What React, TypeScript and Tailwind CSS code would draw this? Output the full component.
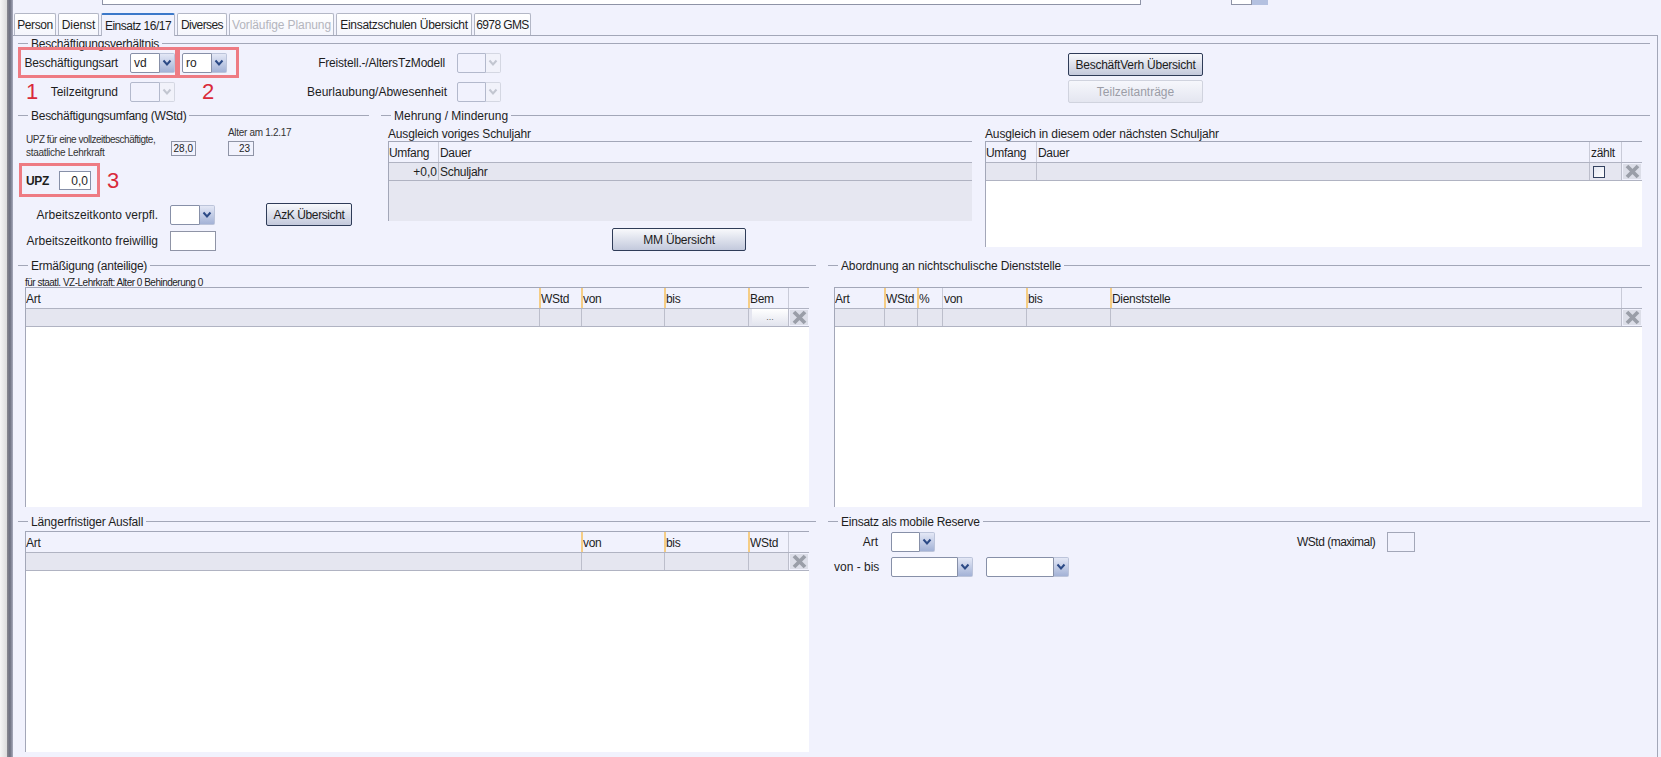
import type { ReactNode } from "react";

type Col = { label: string; w: string; mark?: boolean; cell?: ReactNode };

const tabs = [
  { label: "Person", w: "w-[42px]", track: "tracking-[-0.4px]" },
  { label: "Dienst", w: "w-[41px]", track: "tracking-[-0.1px]" },
  { label: "Einsatz 16/17", w: "w-[74px]", track: "tracking-[-0.5px]", active: true },
  { label: "Diverses", w: "w-[50px]", track: "tracking-[-0.6px]" },
  { label: "Vorläufige Planung", w: "w-[105px]", track: "tracking-[-0.1px]", disabled: true },
  { label: "Einsatzschulen Übersicht", w: "w-[136px]", track: "tracking-[-0.3px]" },
  { label: "6978 GMS", w: "w-[57px]", track: "tracking-[-0.6px]" },
];

const DeleteIcon = () => (
  <div className="flex h-full w-full items-center justify-center bg-[#dcdee8] border border-[#f1f2fd]">
    <svg width="15" height="15" viewBox="0 0 15 15">
      <path d="M2 2 L13 13 M13 2 L2 13" stroke="#9a9ea8" strokeWidth="3.8" />
    </svg>
  </div>
);

const Chevron = ({ color }: { color: string }) => (
  <svg width="10" height="8" viewBox="0 0 10 8">
    <path d="M1.5 1.5 L5 5.5 L8.5 1.5" fill="none" stroke={color} strokeWidth="2" />
  </svg>
);

const Combo = ({ value, field, disabled }: { value?: string; field: string; disabled?: boolean }) => (
  <div className="flex h-[20px] shrink-0">
    <div
      className={`${field} flex items-center border pl-[3px] rounded-l-[2px] ${
        disabled ? "border-[#b3b9cc] bg-[#f1f2fd]" : "border-[#8790a8] bg-white"
      }`}
    >
      {value}
    </div>
    <div
      className={`flex w-[15px] items-center justify-center border border-l-0 rounded-r-[2px] ${
        disabled
          ? "border-[#d4d7e2] bg-[#f1f2fa]"
          : "border-[#bcc4da] bg-gradient-to-b from-[#e4e8f6] to-[#a3b2d6]"
      }`}
    >
      <Chevron color={disabled ? "#c2c6d0" : "#2c4a86"} />
    </div>
  </div>
);

const Button = ({ label, w, track = "", disabled }: { label: string; w: string; track?: string; disabled?: boolean }) => (
  <div
    className={`${w} ${track} flex h-[23px] shrink-0 items-center justify-center rounded-[2px] border ${
      disabled
        ? "border-[#d0d3de] bg-gradient-to-b from-[#f6f7fc] to-[#e4e6f0] text-[#9b9da6]"
        : "border-[#2f3c58] bg-gradient-to-b from-[#f8f9fc] to-[#c3c9dc] text-[#1c1c1c]"
    }`}
  >
    {label}
  </div>
);

const Section = ({ title, track = "" }: { title: string; track?: string }) => (
  <div className="flex h-[14px] items-center">
    <div className="h-px w-[10px] bg-[#a3a7b8]" />
    <span className={`${track} px-[3px] pt-px leading-[14px] whitespace-nowrap`}>{title}</span>
    <div className="h-px flex-1 bg-[#a3a7b8]" />
  </div>
);

const Table = ({ cols, width, body }: { cols: Col[]; width: string; body: string }) => (
  <div className={`${width} flex flex-col border-t border-l border-[#a3a7b8]`}>
    <div className="flex h-[20px] shrink-0">
      {cols.map((c, i) => (
        <div
          key={i}
          className={`${c.w} flex items-center overflow-hidden whitespace-nowrap pt-px tracking-[-0.3px] ${
            i === 0 ? "" : c.mark ? "border-l-2 border-[#f5cd85]" : "border-l border-[#c9cbd8] pl-[1px]"
          }`}
        >
          {c.label}
        </div>
      ))}
    </div>
    <div className="flex h-[19px] shrink-0 border-t border-b border-[#b0b3c2] bg-[#e5e6f0]">
      {cols.map((c, i) => (
        <div key={i} className={`${c.w} flex items-center overflow-hidden ${i === 0 ? "" : "border-l border-[#bcbecb]"}`}>
          {c.cell}
        </div>
      ))}
    </div>
    <div className={body} />
  </div>
);

const Small = ({ children, track = "tracking-[-0.3px]" }: { children: ReactNode; track?: string }) => (
  <div className={`${track} text-[10px] leading-[13px] text-[#333] whitespace-nowrap`}>{children}</div>
);

const Annotation = ({ children, className = "" }: { children: ReactNode; className?: string }) => (
  <span className={`text-[22px] leading-[20px] text-[#d92a3a] ${className}`}>{children}</span>
);

const x = <DeleteIcon />;

export default function App() {
  return (
    <div className="flex h-[757px] w-[1661px] overflow-hidden bg-[#f1f2fd] font-['Liberation_Sans',Arial,sans-serif] text-[12px] text-[#1e1e1e]">
      <div className="w-[7px] shrink-0 bg-gradient-to-r from-[#f6f6f6] to-[#dcdcdc]" />
      <div className="w-[6px] shrink-0 bg-gradient-to-r from-[#8a8a90] via-[#6c6f80] to-[#a9acbd]" />

      <div className="flex w-[1648px] flex-col">
        {/* top field, cut off by the screenshot */}
        <div className="flex h-[13px] shrink-0 items-start">
          <div className="ml-[89px] h-[5px] w-[1039px] border-x border-b border-[#8e93a6] bg-white" />
          <div className="ml-[90px] h-[5px] w-[21px] border-x border-b border-[#8e93a6] bg-white" />
          <div className="h-[5px] w-[16px] bg-[#b4c1e0]" />
        </div>

        {/* tabs */}
        <div className="relative z-10 flex h-[23px] shrink-0 gap-[2px] pl-[1px]">
          {tabs.map((t) => (
            <div
              key={t.label}
              className={`${t.w} ${t.track} flex items-center justify-center whitespace-nowrap rounded-t-[2px] border-x border-t border-[#b3b7c6] ${
                t.active
                  ? "h-[23px] border-t-2 border-t-[#3b78c9] bg-[#f1f2fd]"
                  : "h-[22px] bg-gradient-to-b from-white to-[#f4f5fc]"
              } ${t.disabled ? "text-[#b4b5bd]" : ""}`}
            >
              {t.label}
            </div>
          ))}
        </div>

        {/* tab pane */}
        <div className="-mt-px flex w-[1645px] flex-1 flex-col border-t border-r border-[#a3a7b8] pl-[5px] pr-[7px]">
          {/* Beschäftigungsverhältnis */}
          <div className="h-[72px] shrink-0">
            <Section title="Beschäftigungsverhältnis" track="tracking-[-0.22px]" />
            <div className="ml-[8px] mt-[3px] flex">
              <div className="flex w-[281px] flex-col gap-[9px]">
                <div className="relative flex items-center">
                  <div className="-ml-[2px] w-[94px] shrink-0 whitespace-nowrap text-right tracking-[-0.15px]">Beschäftigungsart</div>
                  <div className="ml-[12px]"><Combo value="vd" field="w-[30px]" /></div>
                  <div className="ml-[7px]"><Combo value="ro" field="w-[30px]" /></div>
                  <div className="absolute -left-[8px] -top-[6px] h-[31px] w-[160px] border-[3px] border-[#ee7b83]" />
                  <div className="absolute left-[151px] -top-[6px] h-[31px] w-[62px] border-[3px] border-[#ee7b83]" />
                </div>
                <div className="relative flex items-center">
                  <div className="w-[92px] shrink-0 text-right">Teilzeitgrund</div>
                  <div className="ml-[12px]"><Combo field="w-[30px]" disabled /></div>
                  <Annotation className="ml-[27px]">2</Annotation>
                  <Annotation className="absolute left-0 top-0">1</Annotation>
                </div>
              </div>
              <div className="flex w-[761px] flex-col gap-[9px]">
                <div className="flex items-center">
                  <div className="w-[138px] shrink-0 whitespace-nowrap text-right tracking-[-0.2px]">Freistell.-/AltersTzModell</div>
                  <div className="ml-[12px]"><Combo field="w-[29px]" disabled /></div>
                </div>
                <div className="flex items-center">
                  <div className="w-[138px] shrink-0 whitespace-nowrap text-right">Beurlaubung/Abwesenheit</div>
                  <div className="ml-[12px]"><Combo field="w-[29px]" disabled /></div>
                </div>
              </div>
              <div className="flex flex-col gap-[4px]">
                <Button label="BeschäftVerh Übersicht" w="w-[135px]" track="tracking-[-0.24px]" />
                <Button label="Teilzeitanträge" w="w-[135px]" disabled />
              </div>
            </div>
          </div>

          {/* Beschäftigungsumfang / Mehrung */}
          <div className="flex h-[150px] shrink-0 gap-[12px]">
            <div className="w-[351px] shrink-0">
              <Section title="Beschäftigungsumfang (WStd)" track="tracking-[-0.27px]" />
              <div className="ml-[8px] flex h-[49px]">
                <div className="w-[145px] pt-[11px]">
                  <Small track="tracking-[-0.5px]">UPZ für eine vollzeitbeschäftigte,</Small>
                  <Small>staatliche Lehrkraft</Small>
                </div>
                <div className="mt-[19px] flex h-[15px] w-[25px] items-center justify-end border border-[#8f94a6] pr-[2px] text-[10px]">28,0</div>
                <div className="ml-[32px] mt-[4px]">
                  <Small>Alter am 1.2.17</Small>
                  <div className="mt-[2px] flex h-[15px] w-[26px] items-center justify-end border border-[#8f94a6] pr-[3px] text-[10px]">23</div>
                </div>
              </div>
              <div className="relative ml-[8px] flex h-[19px] items-center">
                <b className="w-[33px] tracking-[-0.3px]">UPZ</b>
                <div className="flex h-[19px] w-[32px] items-center justify-end border border-[#8790a8] bg-white pr-[2px]">0,0</div>
                <Annotation className="ml-[16px]">3</Annotation>
                <div className="absolute -left-[7px] -top-[8px] h-[34px] w-[81px] border-[3px] border-[#ee7b83]" />
              </div>
              <div className="ml-[8px] mt-[13px] flex h-[23px] items-center">
                <div className="w-[132px] shrink-0 whitespace-nowrap text-right">Arbeitszeitkonto verpfl.</div>
                <div className="ml-[12px]"><Combo field="w-[30px]" /></div>
                <div className="ml-[51px]"><Button label="AzK Übersicht" w="w-[86px]" track="tracking-[-0.4px]" /></div>
              </div>
              <div className="ml-[8px] mt-[5px] flex h-[20px] items-center">
                <div className="w-[132px] shrink-0 whitespace-nowrap text-right">Arbeitszeitkonto freiwillig</div>
                <div className="ml-[12px] h-[20px] w-[46px] border border-[#8f94a6] bg-white" />
              </div>
            </div>

            <div className="flex-1">
              <Section title="Mehrung / Minderung" />
              <div className="ml-[7px] mt-[5px] flex gap-[13px]">
                <div>
                  <div className="h-[14px] leading-[14px] tracking-[-0.17px]">Ausgleich voriges Schuljahr</div>
                  <Table
                    width="w-[584px]"
                    body="h-[40px] bg-[#e6e7f1]"
                    cols={[
                      { label: "Umfang", w: "w-[49px]", cell: <div className="w-full pr-[1px] text-right">+0,0</div> },
                      { label: "Dauer", w: "w-[534px]", cell: <div className="pl-px tracking-[-0.3px]">Schuljahr</div> },
                    ]}
                  />
                  <div className="ml-[224px] mt-[7px]"><Button label="MM Übersicht" w="w-[134px]" track="tracking-[-0.2px]" /></div>
                </div>
                <div>
                  <div className="h-[14px] leading-[14px] tracking-[-0.13px]">Ausgleich in diesem oder nächsten Schuljahr</div>
                  <Table
                    width="w-[657px]"
                    body="h-[66px] bg-white"
                    cols={[
                      { label: "Umfang", w: "w-[50px]" },
                      { label: "Dauer", w: "w-[553px]" },
                      {
                        label: "zählt",
                        w: "w-[32px]",
                        cell: <div className="ml-[3px] h-[12px] w-[12px] border border-[#33415f] bg-gradient-to-br from-[#e4e7f2] to-white" />,
                      },
                      { label: "", w: "w-[21px]", cell: x },
                    ]}
                  />
                </div>
              </div>
            </div>
          </div>

          {/* Ermäßigung / Abordnung */}
          <div className="flex h-[256px] shrink-0 gap-[12px]">
            <div className="w-[798px] shrink-0">
              <Section title="Ermäßigung (anteilige)" track="tracking-[-0.24px]" />
              <div className="ml-[7px] mt-[4px] h-[11px] pt-px text-[10px] leading-[11px] tracking-[-0.5px] whitespace-nowrap">
                für staatl. VZ-Lehrkraft: Alter 0 Behinderung 0
              </div>
              <div className="ml-[7px]">
                <Table
                  width="w-[784px]"
                  body="h-[180px] bg-white"
                  cols={[
                    { label: "Art", w: "w-[513px]" },
                    { label: "WStd", w: "w-[42px]", mark: true },
                    { label: "von", w: "w-[83px]", mark: true },
                    { label: "bis", w: "w-[84px]", mark: true },
                    {
                      label: "Bem",
                      w: "w-[40px]",
                      mark: true,
                      cell: (
                        <div className="ml-[3px] flex h-full w-full items-center justify-center bg-gradient-to-b from-white to-[#e2e4ee] text-[9px] text-[#666]">
                          ...
                        </div>
                      ),
                    },
                    { label: "", w: "w-[21px]", cell: x },
                  ]}
                />
              </div>
            </div>
            <div className="flex-1">
              <Section title="Abordnung an nichtschulische Dienststelle" track="tracking-[-0.13px]" />
              <div className="ml-[6px] mt-[15px]">
                <Table
                  width="w-[808px]"
                  body="h-[180px] bg-white"
                  cols={[
                    { label: "Art", w: "w-[49px]" },
                    { label: "WStd", w: "w-[33px]", mark: true },
                    { label: "%", w: "w-[25px]", mark: true },
                    { label: "von", w: "w-[84px]" },
                    { label: "bis", w: "w-[84px]", mark: true },
                    { label: "Dienststelle", w: "w-[511px]", mark: true },
                    { label: "", w: "w-[21px]", cell: x },
                  ]}
                />
              </div>
            </div>
          </div>

          {/* Längerfristiger Ausfall / mobile Reserve */}
          <div className="flex flex-1 gap-[12px]">
            <div className="w-[798px] shrink-0">
              <Section title="Längerfristiger Ausfall" track="tracking-[-0.14px]" />
              <div className="ml-[7px] mt-[3px]">
                <Table
                  width="w-[784px]"
                  body="h-[181px] bg-white"
                  cols={[
                    { label: "Art", w: "w-[555px]" },
                    { label: "von", w: "w-[83px]", mark: true },
                    { label: "bis", w: "w-[84px]", mark: true },
                    { label: "WStd", w: "w-[40px]", mark: true },
                    { label: "", w: "w-[21px]", cell: x },
                  ]}
                />
              </div>
            </div>
            <div className="flex-1">
              <Section title="Einsatz als mobile Reserve" track="tracking-[-0.23px]" />
              <div className="ml-[6px] mt-[4px] flex items-center">
                <div className="w-[44px] shrink-0 text-right">Art</div>
                <div className="ml-[13px]"><Combo field="w-[29px]" /></div>
                <div className="ml-[362px] w-[78px] whitespace-nowrap tracking-[-0.5px]">WStd (maximal)</div>
                <div className="ml-[12px] h-[20px] w-[28px] border border-[#a3a7b8]" />
              </div>
              <div className="ml-[6px] mt-[5px] flex items-center">
                <div className="w-[44px] shrink-0 whitespace-nowrap text-right">von - bis</div>
                <div className="ml-[13px]"><Combo field="w-[67px]" /></div>
                <div className="ml-[13px]"><Combo field="w-[68px]" /></div>
              </div>
            </div>
          </div>
        </div>
      </div>
    </div>
  );
}
